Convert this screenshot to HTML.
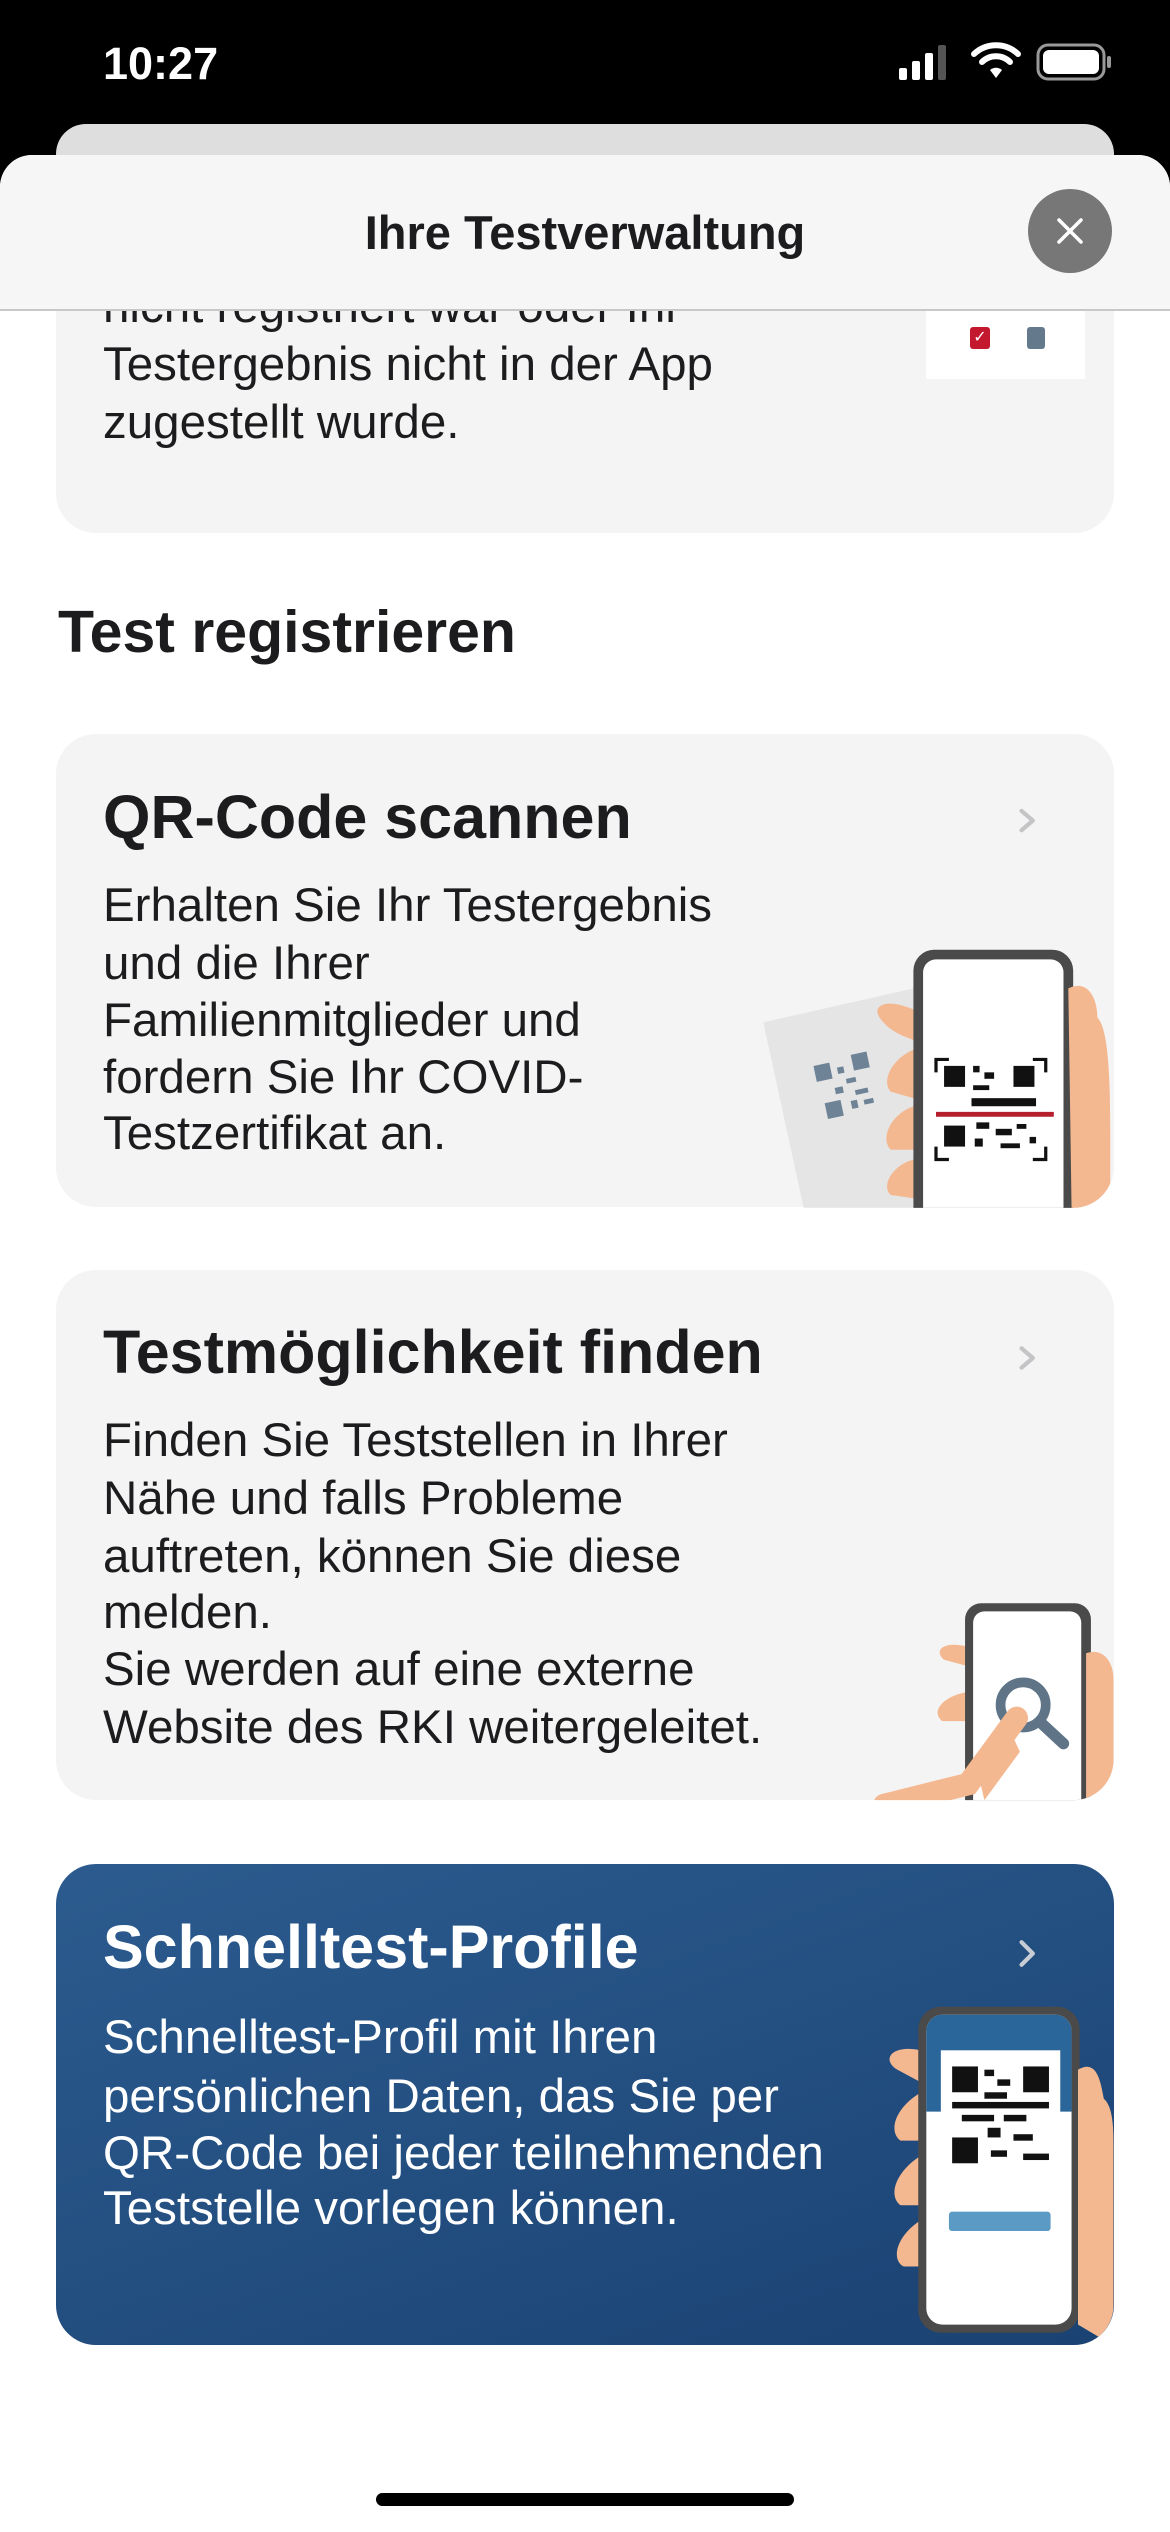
<!DOCTYPE html>
<html><head><meta charset="utf-8"><style>
*{margin:0;padding:0;box-sizing:border-box}
body{width:1170px;height:2532px;background:#fff;position:relative;overflow:hidden;font-family:"Liberation Sans",Arial,sans-serif;color:#1c1c1e}
.abs{position:absolute}
.card{position:absolute;left:56px;width:1058px;border-radius:40px;background:#f4f4f5}
.t{position:absolute;left:103px;font-size:47.5px;line-height:57px;white-space:nowrap}
.h{position:absolute;left:103px;font-size:61px;font-weight:bold;white-space:nowrap}
</style></head><body>
<div class="abs" style="left:0;top:0;width:1170px;height:200px;background:#000"></div>
<div class="abs" style="left:103px;top:38px;font-size:45px;font-weight:bold;color:#fff">10:27</div>
<svg class="abs" style="left:890px;top:40px" width="230" height="50" viewBox="0 0 230 50">
<rect x="9" y="28" width="8" height="12" rx="2" fill="#fff"/><rect x="22" y="21" width="8" height="19" rx="2" fill="#fff"/><rect x="35" y="13" width="8" height="27" rx="2" fill="#fff"/><rect x="48" y="5" width="8" height="35" rx="2" fill="#555"/>
<path d="M84 14 a32 32 0 0 1 44 0" stroke="#fff" stroke-width="6" fill="none" stroke-linecap="round"/><path d="M92 22 a20 20 0 0 1 28 0" stroke="#fff" stroke-width="6" fill="none" stroke-linecap="round"/><path d="M100 30 l6 8 l6 -8 a9 9 0 0 0 -12 0z" fill="#fff"/>
<rect x="148" y="5" width="66" height="34" rx="10" fill="none" stroke="#fff" stroke-width="3" opacity=".6"/><rect x="153" y="10" width="56" height="24" rx="6" fill="#fff"/><rect x="217" y="16" width="4" height="12" rx="2" fill="#fff" opacity=".6"/>
</svg>
<div class="abs" style="left:56px;top:124px;width:1058px;height:80px;border-radius:30px 30px 0 0;background:#dedede"></div>
<div class="abs" style="left:0;top:155px;width:1170px;height:2377px;background:#fff;border-radius:32px 32px 0 0"></div>
<div class="card" style="top:200px;height:333px"></div>
<div class="t" style="top:278px">nicht registriert war oder Ihr</div>
<div class="t" style="top:336px">Testergebnis nicht in der App</div>
<div class="t" style="top:394px">zugestellt wurde.</div>
<div class="abs" style="left:926px;top:300px;width:159px;height:79px;background:#fff"></div>
<div class="abs" style="left:970px;top:327px;width:20px;height:22px;background:#c4182e;border-radius:3px;color:#fff;font-size:16px;text-align:center;line-height:22px">✓</div>
<div class="abs" style="left:1027px;top:327px;width:18px;height:22px;background:#647a8c;border-radius:3px"></div>
<div class="abs" style="left:0;top:155px;width:1170px;height:156px;background:#f6f6f6;border-radius:32px 32px 0 0;border-bottom:2px solid #c8c8c8"></div>
<div class="abs" style="left:0;top:205px;width:1170px;text-align:center;font-size:47px;font-weight:bold;color:#1c1c1e">Ihre Testverwaltung</div>
<div class="abs" style="left:1028px;top:189px;width:84px;height:84px;border-radius:50%;background:#777"></div>
<svg class="abs" style="left:1028px;top:189px" width="84" height="84"><path d="M31 31 L53 53 M53 31 L31 53" stroke="#fff" stroke-width="3.5" stroke-linecap="round"/></svg>

<div class="abs" style="left:58px;top:598px;font-size:59px;font-weight:bold">Test registrieren</div>

<div class="card" style="top:734px;height:473px"></div>
<div class="h" style="top:782px">QR-Code scannen</div>
<div class="t" style="top:877px">Erhalten Sie Ihr Testergebnis</div>
<div class="t" style="top:935px">und die Ihrer</div>
<div class="t" style="top:992px">Familienmitglieder und</div>
<div class="t" style="top:1049px">fordern Sie Ihr COVID-</div>
<div class="t" style="top:1105px">Testzertifikat an.</div>

<div class="card" style="top:1270px;height:530px"></div>
<div class="h" style="top:1317px">Testmöglichkeit finden</div>
<div class="t" style="top:1412px">Finden Sie Teststellen in Ihrer</div>
<div class="t" style="top:1470px">Nähe und falls Probleme</div>
<div class="t" style="top:1528px">auftreten, können Sie diese</div>
<div class="t" style="top:1584px">melden.</div>
<div class="t" style="top:1641px">Sie werden auf eine externe</div>
<div class="t" style="top:1699px">Website des RKI weitergeleitet.</div>

<div class="card" style="top:1864px;height:481px;background:linear-gradient(160deg,#2c5b8f,#1a4272)"></div>
<div class="h" style="top:1912px;color:#fff">Schnelltest-Profile</div>
<div class="t" style="top:2009px;color:#fff">Schnelltest-Profil mit Ihren</div>
<div class="t" style="top:2068px;color:#fff">persönlichen Daten, das Sie per</div>
<div class="t" style="top:2125px;color:#fff">QR-Code bei jeder teilnehmenden</div>
<div class="t" style="top:2180px;color:#fff">Teststelle vorlegen können.</div>

<svg class="abs" style="left:0;top:0" width="1170" height="2532" viewBox="0 0 725 1568">
<defs>
<clipPath id="c2"><rect x="35" y="455" width="655" height="293" rx="25"/></clipPath>
<clipPath id="c3"><rect x="35" y="787" width="655" height="328" rx="25"/></clipPath>
<clipPath id="c4"><rect x="35" y="1155" width="655" height="298" rx="25"/></clipPath>
</defs>
<g fill="none" stroke="#c4c4c6" stroke-width="2.6" stroke-linecap="round" stroke-linejoin="round">
<path d="M633 502 L640 508 L633 514"/><path d="M633 835 L640 841 L633 847"/>
</g>
<path d="M633 1203 L640 1210 L633 1217" fill="none" stroke="#c8ccd4" stroke-width="2.6" stroke-linecap="round" stroke-linejoin="round"/>
<g clip-path="url(#c2)">
<polygon points="473,633 566,612 566,748 498,748" fill="#e5e5e5"/>
<g transform="translate(525,672) rotate(-12)" fill="#6e8396">
<rect x="-18" y="-16" width="10" height="10"/><rect x="6" y="-18" width="10" height="10"/><rect x="-16" y="8" width="10" height="10"/>
<rect x="-4" y="-12" width="4" height="4"/><rect x="0" y="-4" width="6" height="3"/><rect x="-8" y="0" width="5" height="4"/><rect x="4" y="4" width="8" height="3"/><rect x="0" y="10" width="4" height="5"/><rect x="8" y="11" width="6" height="3"/>
</g>
<path d="M566 625 C550 618 540 622 545 630 C552 640 562 642 566 644Z M566 650 C552 656 546 670 552 676 L566 680Z M566 685 C552 690 545 705 552 712 L566 712Z M566 718 C552 722 546 735 552 740 L566 742Z" fill="#f4b891"/>
<rect x="566" y="588" width="99" height="190" rx="13" fill="#4a4a4a"/>
<rect x="572" y="594" width="87" height="180" rx="8" fill="#fff"/>
<path d="M662 612 C674 606 680 618 680 630 C686 636 688 660 688 700 L688 748 L664 748Z" fill="#f4b891"/>
<g fill="#111"><rect x="585" y="660" width="13" height="13"/><rect x="628" y="660" width="13" height="13"/><rect x="585" y="697" width="13" height="13"/>
<rect x="603" y="660" width="4" height="4"/><rect x="610" y="664" width="6" height="4"/><rect x="603" y="672" width="10" height="3"/><rect x="602" y="680" width="40" height="5"/><rect x="605" y="695" width="8" height="4"/><rect x="617" y="699" width="10" height="4"/><rect x="630" y="696" width="6" height="3"/><rect x="604" y="705" width="5" height="5"/><rect x="620" y="708" width="12" height="3"/><rect x="638" y="704" width="4" height="4"/></g>
<path d="M580 664 V656 H588 M640 656 H648 V664 M580 710 V718 H588 M640 718 H648 V710" stroke="#111" stroke-width="2" fill="none"/>
<line x1="580" y1="690" x2="653" y2="690" stroke="#b51f2e" stroke-width="3"/>
</g>
<g clip-path="url(#c3)">
<path d="M600 1020 C585 1016 578 1022 585 1028 L600 1032Z M600 1048 C585 1050 576 1060 584 1066 L600 1066Z" fill="#f4b891"/>
<rect x="598" y="993" width="78" height="150" rx="10" fill="#4a4a4a"/>
<rect x="603" y="998" width="67" height="140" rx="7" fill="#fff"/>
<circle cx="634" cy="1056" r="14" stroke="#5f7587" stroke-width="6" fill="none"/>
<line x1="645" y1="1067" x2="659" y2="1080" stroke="#5f7587" stroke-width="7" stroke-linecap="round"/>
<path d="M548 1118 L600 1105 L630 1064" stroke="#f4b891" stroke-width="14" stroke-linecap="round" fill="none"/>
<path d="M604 1090 L625 1070 L632 1085 L610 1115Z" fill="#f4b891"/>
<path d="M673 1024 C684 1020 690 1030 690 1040 L690 1115 L673 1115Z" fill="#f4b891"/>
</g>
<g clip-path="url(#c4)">
<path d="M571 1270 C552 1266 546 1276 556 1282 L571 1290Z M571 1296 C555 1305 550 1320 558 1326 L571 1326Z M571 1335 C555 1345 550 1360 558 1366 L571 1366Z M571 1375 C555 1385 552 1400 560 1404 L571 1404Z" fill="#f4b891"/>
<rect x="569" y="1243" width="100" height="202" rx="14" fill="#4a4a4a"/>
<rect x="574" y="1248" width="90" height="192" rx="10" fill="#fff"/>
<path d="M584 1248 H654 A10 10 0 0 1 664 1258 V1308 H574 V1258 A10 10 0 0 1 584 1248Z" fill="#2a6699"/>
<rect x="583" y="1270" width="74" height="78" fill="#fff"/>
<g fill="#111"><rect x="590" y="1280" width="16" height="16"/><rect x="634" y="1280" width="16" height="16"/><rect x="590" y="1324" width="16" height="16"/>
<rect x="610" y="1282" width="6" height="4"/><rect x="618" y="1288" width="8" height="4"/><rect x="610" y="1296" width="14" height="4"/><rect x="590" y="1302" width="60" height="4"/><rect x="596" y="1310" width="20" height="4"/><rect x="622" y="1310" width="14" height="4"/><rect x="612" y="1318" width="8" height="6"/><rect x="628" y="1322" width="12" height="4"/><rect x="614" y="1332" width="10" height="4"/><rect x="634" y="1334" width="16" height="4"/></g>
<rect x="588" y="1370" width="63" height="12" rx="2" fill="#5b9ac4"/>
<path d="M668 1282 C680 1275 682 1290 684 1300 C690 1305 690 1320 690 1330 L690 1453 L668 1440Z" fill="#f4b891"/>
</g>
</svg>
<div class="abs" style="left:376px;top:2493px;width:418px;height:13px;border-radius:7px;background:#000"></div>
</body></html>
